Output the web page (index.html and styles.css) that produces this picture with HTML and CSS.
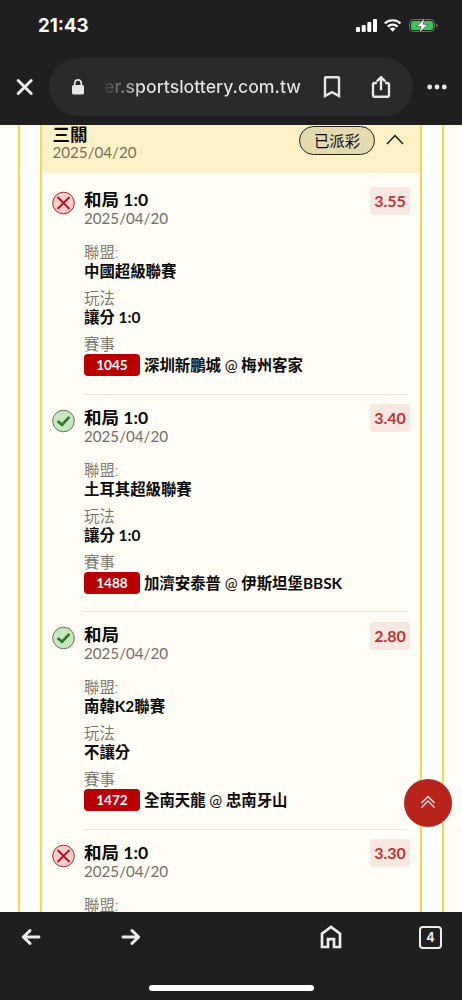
FILE: index.html
```html
<!DOCTYPE html>
<html lang="zh-Hant">
<head>
<meta charset="utf-8">
<title>運動彩券</title>
<link rel="stylesheet" href="styles.css">
</head>
<body>
<div class="phone">
  <header class="chrome">
    <div class="status">
      <span class="time">21:43</span>
      <svg class="status-icons" width="84" height="16" viewBox="0 0 84 16">
        <g fill="#fff">
          <rect x="0" y="9" width="4" height="5" rx="1"/>
          <rect x="5.7" y="7" width="4" height="7" rx="1"/>
          <rect x="11.3" y="4" width="4" height="10" rx="1"/>
          <rect x="17" y="1" width="4" height="13" rx="1"/>
        </g>
        <g fill="none" stroke="#fff" stroke-width="2.2">
          <path d="M28.800 5.400a11.300 11.300 0 0 1 15.700 0"/>
          <path d="M31.800 8.600a7 7 0 0 1 9.700 0"/>
        </g>
        <path d="M33.700 10.800a4.300 4.300 0 0 1 5.900 0L36.650 13.800z" fill="#fff"/>
        <rect x="53.500" y="1.500" width="25" height="12" rx="4" fill="none" stroke="#6b756d"/>
        <rect x="55" y="3" width="22" height="9" rx="2.500" fill="#34c759"/>
        <path d="M80 5.500v4q1.600-.4 1.600-2t-1.600-2z" fill="#6b756d"/>
        <path d="M68.300.800 60.800 8.500h4.700L63.600 14.200 71.500 6.500H66.700z" fill="#fff" stroke="#1f1f1f" stroke-width="1" paint-order="stroke"/>
      </svg>
    </div>
    <div class="toolbar">
      <svg class="close" width="18" height="18" viewBox="0 0 18 18"><path d="M2.200 2.500l13 13M15.200 2.500l-13 13" stroke="#ececee" stroke-width="3" stroke-linecap="round"/></svg>
      <div class="address">
        <svg class="lock" width="12" height="16" viewBox="0 0 12 16"><rect y="6" width="12" height="9.500" rx="1.700" fill="#e6e7ea"/><path d="M2.700 7V4.200a3.300 3.300 0 0 1 6.600 0V7" fill="none" stroke="#e6e7ea" stroke-width="1.700"/></svg>
        <span class="url">er.sportslottery.com.tw</span>
        <svg class="bookmark" width="18" height="22" viewBox="0 0 18 22"><path d="M2 2.200Q2 1.200 3 1.200H15Q16 1.200 16 2.200V20L9 16.200 2 20z" fill="none" stroke="#e6e7ea" stroke-width="2.400"/></svg>
        <svg class="share" width="20" height="24" viewBox="0 0 20 24"><path d="M6 8H3.500Q2 8 2 9.500V20Q2 21.700 3.700 21.700H16.300Q18 21.700 18 20V9.500Q18 8 16.500 8H14M10 15.300V2.500M5.800 6.300 10 2.100 14.200 6.300" fill="none" stroke="#e6e7ea" stroke-width="2.400"/></svg>
      </div>
      <svg class="more" width="20" height="6" viewBox="0 0 20 6"><g fill="#ececee"><circle cx="2.700" cy="3" r="2.400"/><circle cx="10" cy="3" r="2.400"/><circle cx="17.300" cy="3" r="2.400"/></g></svg>
    </div>
  </header>

  <main class="page">
    <div class="frame">
      <section class="ticket">
        <div class="ticket-head">
          <div class="ticket-name"><h1>三關</h1><p class="date">2025/04/20</p></div>
          <span class="paid">已派彩</span>
          <svg class="chevron" width="18" height="12" viewBox="0 0 18 12"><path d="M1 10 9 1.500 17 10" fill="none" stroke="#1c1a12" stroke-width="1.500"/></svg>
        </div>
        <div class="bets">
          <article class="bet">
            <svg class="mark" width="24" height="24" viewBox="0 0 24 24"><circle cx="11.500" cy="12" r="10.800" fill="#fccfca" stroke="#a5232b"/><path d="M5.500 6 17.500 18M17.500 6 5.500 18" stroke="#b40d18" stroke-width="1.800"/></svg>
            <div class="detail">
              <div class="top"><div><h2>和局 1:0</h2><p class="date">2025/04/20</p></div><span class="odds">3.55</span></div>
              <dl><dt>聯盟:</dt><dd>中國超級聯賽</dd><dt>玩法</dt><dd>讓分 1:0</dd><dt>賽事</dt></dl>
              <div class="match"><span class="code">1045</span><span>深圳新鵬城 <span class="at">@</span> 梅州客家</span></div>
            </div>
          </article>
          <article class="bet">
            <svg class="mark" width="24" height="24" viewBox="0 0 24 24"><circle cx="11.500" cy="12" r="10.800" fill="#c9e6bf" stroke="#5c7858"/><path d="M5.700 12 10 15.800 17.400 7.900" fill="none" stroke="#2d772b" stroke-width="2.700"/></svg>
            <div class="detail">
              <div class="top"><div><h2>和局 1:0</h2><p class="date">2025/04/20</p></div><span class="odds">3.40</span></div>
              <dl><dt>聯盟:</dt><dd>土耳其超級聯賽</dd><dt>玩法</dt><dd>讓分 1:0</dd><dt>賽事</dt></dl>
              <div class="match"><span class="code">1488</span><span>加濟安泰普 <span class="at">@</span> 伊斯坦堡BBSK</span></div>
            </div>
          </article>
          <article class="bet">
            <svg class="mark" width="24" height="24" viewBox="0 0 24 24"><circle cx="11.500" cy="12" r="10.800" fill="#c9e6bf" stroke="#5c7858"/><path d="M5.700 12 10 15.800 17.400 7.900" fill="none" stroke="#2d772b" stroke-width="2.700"/></svg>
            <div class="detail">
              <div class="top"><div><h2>和局</h2><p class="date">2025/04/20</p></div><span class="odds">2.80</span></div>
              <dl><dt>聯盟:</dt><dd>南韓K2聯賽</dd><dt>玩法</dt><dd>不讓分</dd><dt>賽事</dt></dl>
              <div class="match"><span class="code">1472</span><span>全南天龍 <span class="at">@</span> 忠南牙山</span></div>
            </div>
          </article>
          <article class="bet">
            <svg class="mark" width="24" height="24" viewBox="0 0 24 24"><circle cx="11.500" cy="12" r="10.800" fill="#fccfca" stroke="#a5232b"/><path d="M5.500 6 17.500 18M17.500 6 5.500 18" stroke="#b40d18" stroke-width="1.800"/></svg>
            <div class="detail">
              <div class="top"><div><h2>和局 1:0</h2><p class="date">2025/04/20</p></div><span class="odds">3.30</span></div>
              <dl><dt>聯盟:</dt></dl>
            </div>
          </article>
        </div>
      </section>
    </div>
    <div class="to-top"><svg width="16" height="14" viewBox="0 0 16 14"><path d="M1.500 8 8 1.600 14.500 8M1.500 12.400 8 6 14.500 12.400" fill="none" stroke="#fbe9e7" stroke-width="1.400"/></svg></div>
  </main>

  <footer class="bottom">
    <nav class="nav">
      <svg width="20" height="16" viewBox="0 0 20 16"><path d="M18 8H2.500M9 1.600 2.300 8 9 14.400" fill="none" stroke="#ececee" stroke-width="2.900" stroke-linecap="round" stroke-linejoin="round"/></svg>
      <svg class="forward" width="20" height="16" viewBox="0 0 20 16"><path d="M2 8H17.500M11 1.600 17.700 8 11 14.400" fill="none" stroke="#ececee" stroke-width="2.900" stroke-linecap="round" stroke-linejoin="round"/></svg>
      <svg class="home" width="22" height="24" viewBox="0 0 22 24"><path d="M2 22V8.700L11 2 20 8.700V22H14V14.200H8V22z" fill="none" stroke="#ececee" stroke-width="2.700"/></svg>
      <span class="tabs">4</span>
    </nav>
    <div class="indicator"></div>
  </footer>
</div>
</body>
</html>
```
FILE: styles.css
```css
* { box-sizing: border-box; }
body, h1, h2, p, dl, dd { margin: 0; }
body { font-family: Lato, "Noto Sans CJK TC", sans-serif; color: #0b0b0b; }
svg { display: block; flex: none; }
.phone { width: 462px; height: 1000px; display: flex; flex-direction: column; overflow: hidden; }

.chrome { height: 125px; flex: none; background: #1f1f20; font-family: Inter, sans-serif; }
.status { height: 58px; padding: 0 22px 0 38px; display: flex; justify-content: space-between; }
.time { padding-top: 13px; font-size: 18.6px; line-height: 25px; font-weight: 700; color: #fff; }
.status-icons { margin-top: 18px; }
.toolbar { display: flex; align-items: center; height: 58px; padding-left: 16px; }
.address { display: flex; align-items: center; width: 364px; height: 58px; margin-left: 15px; padding-left: 23px; border-radius: 29px; background: #292a2c; }
.url { width: 197px; margin-left: 20px; font-size: 17.7px; line-height: 24px; font-weight: 500; white-space: nowrap; color: transparent; background: linear-gradient(90deg, #37383a 0, #77787a 16px, #e4e5e8 38px); -webkit-background-clip: text; background-clip: text; }
.bookmark { margin-left: 22px; }
.share { margin-left: 30px; }
.more { margin-left: 14px; }

.page { position: relative; height: 787px; flex: none; padding: 0 18px; overflow: hidden; background: #fffdf5; }
.frame { height: 100%; border: solid #fcd64f; border-width: 0 2px; padding: 0 20px; background: #fff; }
.ticket { height: 100%; border: solid #fcd64f; border-width: 0 2px; background: #fffdf5; }
.ticket-head { display: flex; height: 48px; padding: 0 16px 0 10.5px; background: #fef1c7; }
.ticket-name { flex: 1; }
h1, h2 { font-size: 17.5px; line-height: 22px; font-weight: 700; }
h1 { line-height: 20px; }
h2 { white-space: nowrap; }
.date { font-size: 15.15px; line-height: 16px; color: #716e68; }
.ticket-head .date { margin-top: -0.6px; color: #777057; }
.paid { width: 76px; height: 29px; margin-top: 1px; border: 1px solid #242115; border-radius: 15px; background: #e5daae; font-size: 15.4px; line-height: 29px; text-align: center; }
.chevron { margin: 9px 0 0 11px; }
.bets { padding: 4px 12px 0 9px; }
.bet { display: flex; height: 217.5px; padding-top: 12px; }
.mark { margin: 2px 0 0 1px; }
.detail { flex: 1; margin-left: 8px; border-bottom: 1px solid #e9e5de; }
.top { display: flex; justify-content: space-between; height: 54px; }
.top .date { margin-top: -1px; }
.odds { width: 40px; height: 28px; margin: -2.5px -2px 0 0; border-radius: 4px; background: #f9e8e2; color: #b83431; font-size: 16px; line-height: 28px; font-weight: 700; text-align: center; }
dl { font-size: 15.4px; }
dt { line-height: 18px; font-weight: 350; color: #74716b; }
dd { margin-bottom: 8px; line-height: 20px; font-weight: 700; }
.match { display: flex; align-items: center; height: 22px; margin-top: 1px; font-size: 15.4px; line-height: 22px; font-weight: 700; white-space: nowrap; }
.code { width: 56px; margin-right: 4px; border-radius: 4px; background: #b80000; color: #fff; font-size: 13.6px; text-align: center; }
.at { font-weight: 400; }
.to-top { position: absolute; left: 404px; top: 654px; width: 48px; height: 48px; display: flex; align-items: center; justify-content: center; border-radius: 50%; background: #b8231c; }
.to-top svg { margin-top: -3px; }

.bottom { flex: 1; padding-top: 13px; background: #1f1f20; }
.nav { display: flex; align-items: center; height: 24px; padding-left: 21px; }
.forward { margin-left: 80px; }
.home { margin-left: 179px; }
.tabs { width: 23px; height: 23px; margin-left: 77px; border: 2px solid #ececee; border-radius: 4px; color: #ececee; font: 700 12.5px/19px Inter, sans-serif; text-align: center; }
.indicator { width: 165px; height: 6px; margin: 36px auto 0; border-radius: 3px; background: #fff; }
```
